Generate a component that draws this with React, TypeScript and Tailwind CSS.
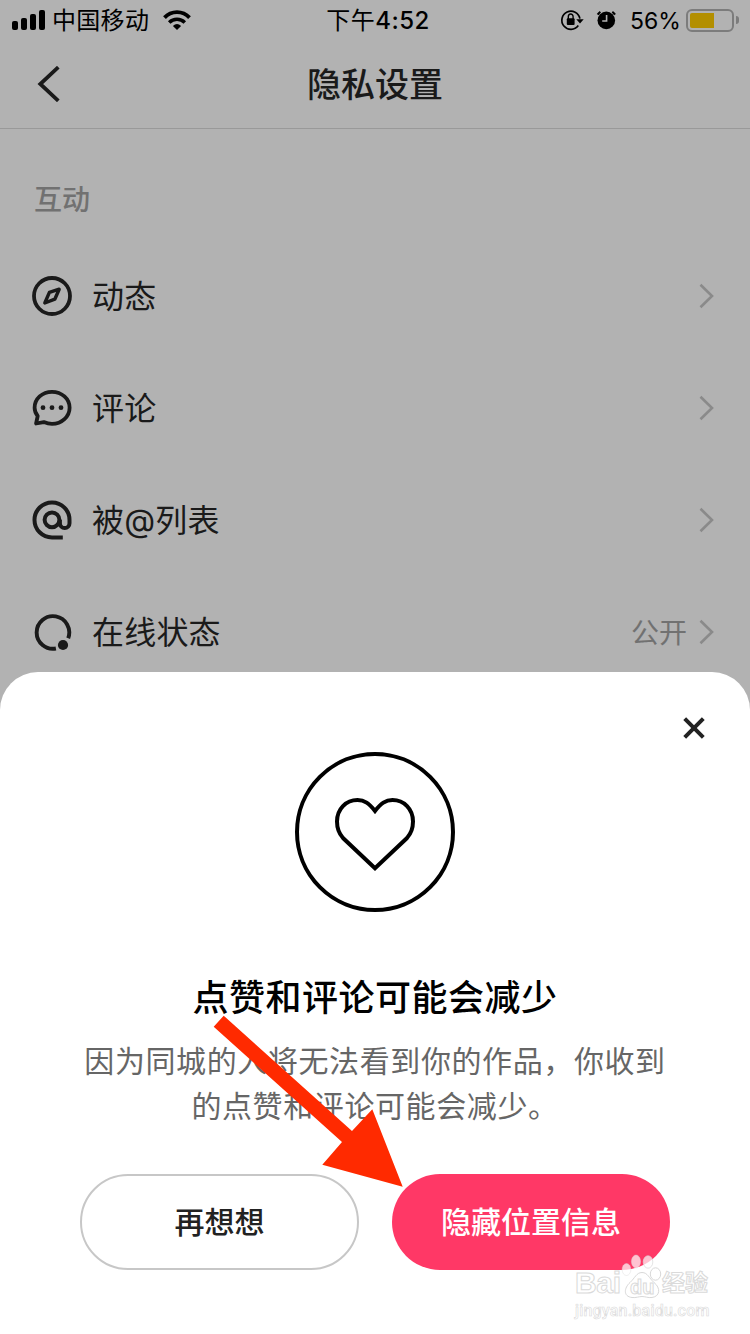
import type { ReactNode } from 'react';

const CompassIcon = () => (
  <svg width="40" height="40" viewBox="0 0 40 40" fill="none" stroke="#1a1a1a">
    <circle cx="20" cy="20" r="18" strokeWidth="3.8" />
    <path d="M27.2 13.2 17.4 16.4 12.8 27 22.8 23.2Z" strokeWidth="3.4" strokeLinejoin="round" />
  </svg>
);

const CommentIcon = () => (
  <svg width="40" height="40" viewBox="0 0 40 40" fill="none" stroke="#1a1a1a">
    <path
      d="M4.1 35.5 5.7 28C3.7 25.5 2.6 22.7 2.6 19.7 2.6 10.9 10.2 3.8 20 3.8S37.6 10.9 37.6 19.7 29.8 35.8 20 35.8C17 35.8 14.3 35.1 11.8 34.1Z"
      strokeWidth="3.8"
      strokeLinejoin="round"
    />
    <g fill="#1a1a1a" stroke="none">
      <circle cx="11" cy="19.7" r="2.4" />
      <circle cx="20" cy="19.7" r="2.4" />
      <circle cx="29" cy="19.7" r="2.4" />
    </g>
  </svg>
);

const AtIcon = () => (
  <svg width="40" height="40" viewBox="0 0 40 40" fill="none" stroke="#1a1a1a" strokeWidth="4">
    <circle cx="20" cy="19.8" r="7.4" />
    <path d="M30.8 37.4H20A17.5 17.5 0 1 1 37.5 20V23.2A4.8 4.8 0 0 1 27.9 23.2V19.8" />
  </svg>
);

const OnlineIcon = () => (
  <svg width="40" height="40" viewBox="0 0 40 40" fill="none">
    <path d="M36.2 26.2A16.3 16.3 0 1 0 23.9 36.5" stroke="#1a1a1a" strokeWidth="3.9" />
    <circle cx="31" cy="33" r="5.1" fill="#1a1a1a" />
  </svg>
);

const Chevron = () => (
  <svg width="16" height="28" viewBox="0 0 16 28" fill="none">
    <path d="M1.5 2.7 13 14 1.5 25.3" stroke="#8a8a8a" strokeWidth="2.6" />
  </svg>
);

const StatusBar = () => (
  <div className="flex h-10 items-center text-black">
    <div className="flex w-[315px] items-center pl-3">
      <div className="flex h-5 items-end gap-[3px]">
        <i className="h-[9px] w-1.5 rounded-[2px] bg-black" />
        <i className="h-3 w-1.5 rounded-[2px] bg-black" />
        <i className="h-4 w-1.5 rounded-[2px] bg-black" />
        <i className="h-5 w-1.5 rounded-[2px] bg-black" />
      </div>
      <span className="ml-[7px] w-[111px] pt-0.5 text-2xl leading-10 tracking-[0.3px] whitespace-nowrap">中国移动</span>
      <svg width="28" height="20" viewBox="0 0 28 20" fill="none" stroke="#000">
        <path d="M1.5 7.6A17 17 0 0 1 26.5 7.6" strokeWidth="3.8" />
        <path d="M6.2 12.6A11 11 0 0 1 21.8 12.6" strokeWidth="3.5" />
        <path d="M9.9 16Q14 12.2 18.1 16L14 20Z" fill="#000" stroke="none" />
      </svg>
    </div>
    <span className="w-[126px] pt-0.5 text-center text-2xl leading-10 tracking-[0.5px] whitespace-nowrap">
      下午<span className="font-medium">4:52</span>
    </span>
    <div className="flex flex-1 items-center">
      <svg className="ml-[119px]" width="24" height="22" viewBox="0 0 24 22" fill="none">
        <path d="M18.3 16.6A9.1 9.1 0 1 1 19.9 9.6" stroke="#000" strokeWidth="1.7" />
        <path d="M16.3 10.2H23.7L20 14.6Z" fill="#000" />
        <path d="M8.3 10V7.8A2.4 2.8 0 0 1 13.1 7.8V10" stroke="#000" strokeWidth="1.4" />
        <rect x="6.8" y="9.2" width="7.8" height="6.8" rx="1" fill="#000" />
      </svg>
      <svg className="ml-[12px]" width="20" height="20" viewBox="0 0 20 20" fill="none">
        <circle cx="10.3" cy="10.4" r="8.8" fill="#000" />
        <path d="M1.7 4.6A9.5 9.5 0 0 1 4.4 1.8M16.3 1.8A9.5 9.5 0 0 1 19 4.6" stroke="#000" strokeWidth="2.2" />
        <path d="M10.6 5V11H6.2" stroke="#b2b2b2" strokeWidth="1.6" />
      </svg>
      <span className="ml-[14px] w-[56px] pt-0.5 text-[23px] leading-10 whitespace-nowrap">56%</span>
      <div className="mt-px flex h-[23px] w-12 items-center rounded-[6px] border-2 border-[#7c7c7c] pl-[2px]">
        <div className="h-[15px] w-6 rounded-l-[2px] bg-[#b38f00]" />
      </div>
      <div className="ml-[2px] h-2 w-[3px] rounded-r-full bg-[#7c7c7c]" />
    </div>
  </div>
);

const rows: { icon: ReactNode; label: string; value?: string }[] = [
  { icon: <CompassIcon />, label: '动态' },
  { icon: <CommentIcon />, label: '评论' },
  { icon: <AtIcon />, label: '被@列表' },
  { icon: <OnlineIcon />, label: '在线状态', value: '公开' },
];

const Watermark = () => (
  <div className="absolute top-[582px] left-[575px] w-[140px] font-['Liberation_Sans','Noto_Sans_CJK_SC',sans-serif] font-bold text-white [-webkit-text-stroke:1px_#dadada]">
    <div className="flex h-[46px] items-end">
      <span className="w-[46px] text-[30px] leading-[34px] tracking-[-0.3px]">Bai</span>
      <div className="relative h-[46px] w-[40px]">
        <svg className="max-w-none" width="42" height="46" viewBox="0 0 42 46" fill="#fff" fillOpacity="0.7" stroke="#d8d8d8">
          <ellipse cx="5.5" cy="15.5" rx="4.4" ry="6" strokeOpacity="0.4" />
          <ellipse cx="15" cy="7.5" rx="4.6" ry="6.5" strokeOpacity="0.4" />
          <ellipse cx="27" cy="8" rx="4.8" ry="6.2" strokeOpacity="0.7" />
          <ellipse cx="34.5" cy="20" rx="5.2" ry="6.2" />
          <path d="M21 18.500C26.500 18.500 28 24 33 28.500 40 34 39 42.500 31 43.500 27 44 24 42.500 21 42.500S15 44 11 43.500C2 42.500 3 34 9 28.500 14 24 15.500 18.500 21 18.500Z" />
        </svg>
        <span className="absolute top-[21px] left-[9px] text-[20px] leading-6">du</span>
      </div>
      <span className="pl-px text-[23px] leading-[33px] whitespace-nowrap">经验</span>
    </div>
    <div className="mt-px font-[Roboto,sans-serif] text-[16px] leading-[19px] font-medium tracking-[0.2px] whitespace-nowrap [-webkit-text-stroke:0.6px_#dadada]">
      jingyan.baidu.com
    </div>
  </div>
);

const ConfirmSheet = () => (
  <div className="relative -mt-4 h-[662px] rounded-t-[38px] bg-white">
    <div className="flex h-20 items-end justify-end pr-[45px] pb-[13px]">
      <svg width="22" height="22" viewBox="0 0 22 22" fill="none">
        <path d="M1.7 1.7 20.3 20.3M20.3 1.7 1.7 20.3" stroke="#222" strokeWidth="4" />
      </svg>
    </div>
    <div className="flex justify-center">
      <svg width="160" height="160" viewBox="0 0 160 160" fill="none" stroke="#000" strokeWidth="4">
        <circle cx="80" cy="80" r="78" />
        <path d="M80 116.3 48 86C44 81.5 42 76 42 69.5 42 57 51 48 62.5 48 69.5 48 74 51.5 80 59 86 51.5 90.5 48 97.5 48 109 48 118 57 118 69.5 118 76 116 81.5 112 86Z" />
      </svg>
    </div>
    <h2 className="mt-[60px] text-center text-4xl leading-[52px] font-medium tracking-[0.5px] text-black">
      点赞和评论可能会减少
    </h2>
    <p className="mt-[15px] text-center text-[30px] leading-[45px] tracking-[0.6px] whitespace-nowrap text-[#666]">
      因为同城的人将无法看到你的作品，你收到
      <br />
      的点赞和评论可能会减少。
    </p>
    <div className="mt-[45px] flex justify-between px-20 text-[30px] font-medium">
      <button className="h-24 w-[279px] rounded-full border-2 border-[#c7c7c7] text-[#222]">再想想</button>
      <button className="h-24 w-[278px] rounded-full bg-[#ff3866] text-white">隐藏位置信息</button>
    </div>
    <svg className="absolute top-[343px] left-[213px]" width="190" height="172" viewBox="0 0 190 172">
      <path d="M10.7 0.7 0.7 11.7 129 127 109.3 149.7 189.7 171.7 159.3 94.3 139 116Z" fill="#ff2a00" />
    </svg>
    <Watermark />
  </div>
);

const App = () => {
  return (
    <div className="h-[1334px] w-[750px] overflow-hidden bg-[#b2b2b2] font-[Inter,'Noto_Sans_CJK_SC',sans-serif]">
      <StatusBar />
      <header className="flex h-[89px] items-center border-b border-[#999] pl-[37px]">
        <svg width="24" height="36" viewBox="0 0 24 36" fill="none">
          <path d="M21.3 1.2 3.3 18 21.3 34.8" stroke="#1a1a1a" strokeWidth="3.8" />
        </svg>
        <h1 className="mr-[61px] flex-1 pt-px text-center text-[34px] font-medium text-[#1a1a1a]">隐私设置</h1>
      </header>
      <main>
        <div className="h-[111px] pt-[51px] pl-[34px] text-[28px] leading-10 font-medium text-[#717171]">互动</div>
        {rows.map(({ icon, label, value }) => (
          <div key={label} className="flex h-28 items-center pr-[35px] pl-8">
            {icon}
            <span className="ml-5 flex-1 pt-px text-[32px] tracking-[0.2px] text-[#1a1a1a]">{label}</span>
            {value && <span className="mr-3 pt-0.5 text-[28px] text-[#717171]">{value}</span>}
            <Chevron />
          </div>
        ))}
      </main>
      <ConfirmSheet />
    </div>
  );
};

export default App;
